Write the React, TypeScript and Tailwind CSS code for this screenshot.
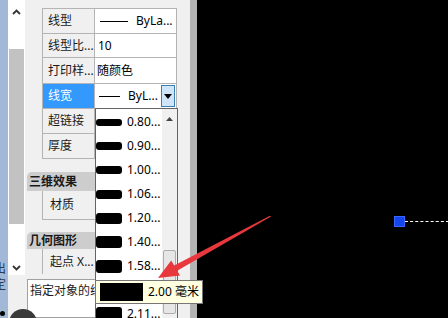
import React from "react";

const F = "font-['Noto_Sans','Noto_Sans_CJK_SC',sans-serif]";

const items: { v: string; h: number }[] = [
  { v: "0.80...", h: 7 },
  { v: "0.90...", h: 8 },
  { v: "1.00...", h: 8 },
  { v: "1.06...", h: 9 },
  { v: "1.20...", h: 11 },
  { v: "1.40...", h: 12 },
  { v: "1.58...", h: 13 },
  { v: "2.00...", h: 15 },
  { v: "2.11...", h: 15 },
];

function Row({
  label,
  h,
  children,
  active,
}: {
  label: string;
  h: string;
  children?: React.ReactNode;
  active?: boolean;
}) {
  return (
    <div className={`flex ${h} border-b border-[#b4b4b4]`}>
      <div
        className={`w-[52px] shrink-0 flex items-center pl-[5px] text-[12px] border-r border-[#b4b4b4] ${
          active ? "bg-[#3399ff] text-white" : "text-[#1a1a1a]"
        }`}
      >
        {label}
      </div>
      <div className="flex-1 bg-white flex items-center text-[12px] text-black relative">
        {children}
      </div>
    </div>
  );
}

export default function App() {
  return (
    <div className={`relative w-[448px] h-[318px] overflow-hidden flex ${F} bg-black`}>
      {/* left blue strip */}
      <div className="w-[8px] shrink-0 bg-[#a1b9d6] relative overflow-hidden">
        <div className="absolute left-[-6px] top-[262px] text-[12px] leading-[14px] text-[#2a3a50]">出</div>
        <div className="absolute left-[-6px] top-[278px] text-[12px] leading-[14px] text-[#2a3a50]">定</div>
        <div className="absolute left-[0px] top-[311px] w-[5px] h-[5px] rounded-full bg-black" />
      </div>

      {/* scrollbar */}
      <div className="w-[17px] shrink-0 flex flex-col bg-[#f0f0f0]">
        <div className="h-[275px] bg-white flex flex-col">
          <div className="h-[24px] flex items-center justify-center">
            <svg width="9" height="6" viewBox="0 0 9 6">
              <path d="M1 5 L4.5 1.5 L8 5" stroke="#333" strokeWidth="1.8" fill="none" />
            </svg>
          </div>
          <div className="h-[25px]" />
          <div className="h-[175px] mx-[1px] bg-[#c2c2c2]" />
          <div className="flex-1 flex items-end justify-center pb-[4px]">
            <svg width="9" height="6" viewBox="0 0 9 6">
              <path d="M1 1 L4.5 4.5 L8 1" stroke="#333" strokeWidth="1.8" fill="none" />
            </svg>
          </div>
        </div>
      </div>

      {/* properties panel */}
      <div className="w-[165px] shrink-0 bg-[#f0f0f0] flex flex-col pt-[8px]">
        <div className="ml-[17px] w-[135px] border-t border-l border-r border-[#b4b4b4]">
          <Row label="线型" h="h-[25px]">
            <div className="w-[28px] h-px bg-black ml-[5px]" />
            <span className="ml-[8px]">ByLa...</span>
          </Row>
          <Row label="线型比..." h="h-[24px]">
            <span className="ml-[3px]">10</span>
          </Row>
          <Row label="打印样..." h="h-[26px]">
            <span className="ml-[2px]">随颜色</span>
          </Row>
          <Row label="线宽" h="h-[25px]" active>
            <div className="w-[21px] h-px bg-black ml-[4px]" />
            <span className="ml-[8px]">ByL...</span>
            <div className="absolute right-[1px] top-[1px] bottom-[1px] w-[14px] border border-[#3c7fb1] bg-[#cfe4f9] flex items-center justify-center">
              <svg width="8" height="5" viewBox="0 0 8 5">
                <path d="M0 0 H8 L4 5 Z" fill="#000" />
              </svg>
            </div>
          </Row>
          <Row label="超链接" h="h-[25px]" />
          <Row label="厚度" h="h-[25px]" />
        </div>

        <div className="mt-[13px] ml-[2px] mr-[13px] h-[19px] bg-[#cdcdcd] rounded-tl-[5px] flex items-center pl-[2px] text-[12px] font-bold text-[#1a1a1a]">
          三维效果
        </div>
        <div className="ml-[17px] mr-[13px] h-[29px] border-l border-b border-[#b4b4b4] flex items-center pl-[7px] text-[12px] text-[#1a1a1a]">
          材质
        </div>

        <div className="mt-[12px] ml-[2px] mr-[13px] h-[17px] bg-[#cdcdcd] rounded-tl-[5px] flex items-center pl-[2px] text-[12px] font-bold text-[#1a1a1a]">
          几何图形
        </div>
        <div className="ml-[17px] mr-[13px] h-[25px] border-l border-[#b4b4b4] flex items-center pl-[7px] text-[12px] text-[#1a1a1a]">
          起点 X...
        </div>

        <div className="mt-[5px] ml-[2px] mr-[13px] flex-1 bg-white border border-[#a0a0a0] pl-[2px] pt-[2px] text-[12px] text-[#1a1a1a] whitespace-nowrap overflow-hidden">
          指定对象的线宽。
        </div>
      </div>

      {/* panel edge */}
      <div className="w-[7px] shrink-0 bg-[#b4b4b4]" />

      {/* canvas */}
      <div className="flex-1 bg-black relative">
        <div className="absolute left-[197px] top-[216px] w-[11px] h-[11px] bg-[#1446ee] border border-[#3a66ff]" />
        <div className="absolute left-[208px] top-[221px] w-[44px] h-px border-t border-dashed border-white" />
      </div>

      {/* dropdown list */}
      <div className="absolute left-[95px] top-[108px] w-[83px] h-[220px] bg-white border border-[#646464] flex">
        <div className="flex-1 flex flex-col pt-[1px]">
          {items.map((it) => (
            <div key={it.v} className="h-[24px] shrink-0 flex items-center">
              <div className="w-[26px] bg-black rounded-[3px]" style={{ height: it.h }} />
              <span className="ml-[5px] text-[12px] text-black">{it.v}</span>
            </div>
          ))}
        </div>
        <div className="w-[15px] shrink-0 bg-[#f0f0f0] flex flex-col items-center">
          <div className="h-[20px] flex items-center justify-center">
            <svg width="7" height="4" viewBox="0 0 7 4">
              <path d="M0 4 L3.5 0 L7 4 Z" fill="#444" />
            </svg>
          </div>
          <div className="mt-[121px] w-[13px] h-[64px] bg-[#e6e6e6] border border-[#adadad] rounded-[2px]" />
        </div>
      </div>

      {/* hovered item tooltip */}
      <div className="absolute left-[95px] top-[280px] w-[108px] h-[24px] bg-[#ffffe1] border border-[#767676] flex items-center">
        <div className="ml-[4px] w-[43px] h-[18px] bg-black" />
        <span className="ml-[5px] text-[12px] text-black whitespace-nowrap">2.00 毫米</span>
      </div>

      {/* bottom dark circle */}
      <div className="absolute left-[9px] top-[309px] w-[28px] h-[28px] rounded-full bg-[#3a3a3a]" />

      {/* red arrow */}
      <svg className="absolute left-0 top-0 pointer-events-none" width="448" height="318" viewBox="0 0 448 318">
        <polygon
          points="158,278 180,275.5 177.2,270.8 271,216.6 270,215.8 174.2,265.6 171.2,260.6"
          fill="#e8383d"
        />
      </svg>
    </div>
  );
}
